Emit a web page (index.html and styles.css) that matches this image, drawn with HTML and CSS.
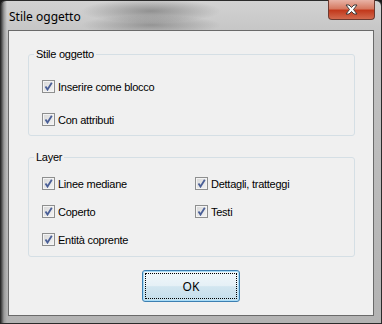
FILE: index.html
```html
<!DOCTYPE html>
<html lang="it">
 <head>
  <meta charset="utf-8">
  <title>Stile oggetto</title>
  <link rel="stylesheet" href="styles.css">
 </head>
 <body>
  <div class="window">
   <div class="titlebar">
    <span class="title">Stile oggetto</span>
    <span class="close">
     <svg width="15" height="11" viewBox="0 0 15 11">
      <path d="M2 1 L5 1 L7.5 3.5 L10 1 L13 1 L9.5 5.5 L13 10 L10 10 L7.5 7.5 L5 10 L2 10 L5.5 5.5 Z"
            fill="#fff" stroke="#3b3b3b" stroke-width="1" stroke-linejoin="round"/>
     </svg>
    </span>
   </div>

   <div class="client">
    <fieldset class="group first">
     <legend>Stile oggetto</legend>
     <div class="list">
      <label class="check"><span class="box"></span>Inserire come blocco</label>
      <label class="check"><span class="box"></span>Con attributi</label>
     </div>
    </fieldset>

    <fieldset class="group second">
     <legend>Layer</legend>
     <div class="grid">
      <label class="check"><span class="box"></span>Linee mediane</label>
      <label class="check"><span class="box"></span>Dettagli, tratteggi</label>
      <label class="check"><span class="box"></span>Coperto</label>
      <label class="check"><span class="box"></span>Testi</label>
      <label class="check"><span class="box"></span>Entità coprente</label>
     </div>
    </fieldset>

    <div class="buttons">
     <button class="btn">OK</button>
    </div>
   </div>
  </div>
 </body>
</html>
```

FILE: styles.css
```css
html, body { margin: 0; padding: 0; background: #1b1b1b; }

.window {
  box-sizing: border-box;
  width: 382px; height: 324px;
  padding: 0 7px 7px 7px;
  border-radius: 6px 6px 0 0;
  border: 1px solid #2b2b2b;
  display: flex; flex-direction: column;
  background:
    radial-gradient(ellipse 70px 12px at 150px 10px, rgba(70,70,70,.45), transparent),
    radial-gradient(ellipse 70px 10px at 150px 24px, rgba(70,70,70,.4), transparent),
    linear-gradient(to right, #3a3a3a 0, #9a9a9a 3px, transparent 6px),
    linear-gradient(to bottom, #d2d2d2 0, #c2c2c2 40px, #b3b3b3 100%);
}

.titlebar {
  height: 29px;
  display: flex; align-items: flex-start;
  font-family: "Noto Sans", sans-serif; font-size: 12px;
  color: #000;
}
.title { padding: 7px 0 0 1px; }
.close {
  margin-left: auto; margin-right: -1px; margin-top: -1px;
  width: 45px; height: 19px;
  border: 1px solid #6e3a30; border-top: none;
  border-radius: 0 0 4px 4px;
  background: linear-gradient(to bottom, #e8b3a6 0, #d67a62 45%, #c2391c 55%, #d26a4e 100%);
  display: flex; align-items: center; justify-content: center;
}

.client {
  flex: 1;
  background: #f0f0f0;
  border: 1px solid #6a6a6a;
  font-family: "Liberation Sans", Arial, sans-serif; font-size: 11px;
  letter-spacing: -0.25px;
  color: #000;
  display: flex; flex-direction: column;
}

.group {
  margin: 0 18px 0 19px;
  padding: 0;
  border: 1px solid #d5dfe5;
  border-radius: 3px;
}
.group legend { margin-left: 5px; padding: 0 2px; line-height: 13px; }
.first { margin-top: 17px; }
.second { margin-top: 15px; }

.list { display: flex; flex-direction: column; gap: 20px; padding: 19px 0 9px 13px; }
.grid {
  display: grid; grid-template-columns: 153px 1fr; row-gap: 15px;
  padding: 13px 0 10px 13px;
}

.check { display: flex; align-items: center; gap: 3px; height: 13px; white-space: nowrap; }
.box {
  box-sizing: border-box;
  width: 13px; height: 13px;
  border: 1px solid #8e8f8f;
  background:
    url("data:image/svg+xml,%3Csvg xmlns='http://www.w3.org/2000/svg' width='11' height='11'%3E%3Cpath d='M2.5 5.5 L4.5 8.5 L8.8 1.8' fill='none' stroke='%234a5f97' stroke-width='1.8'/%3E%3C/svg%3E") no-repeat center,
    linear-gradient(135deg, #d8d8d8, #f4f4f4);
  box-shadow: inset 0 0 0 1px #f4f4f4;
}

.buttons { display: flex; justify-content: center; margin-top: 13px; }
.btn {
  width: 98px; height: 32px;
  font-family: "Noto Sans", sans-serif; font-size: 12px; color: #000;
  letter-spacing: 0;
  border: 1px solid #3c7fb1;
  border-radius: 3px;
  box-shadow: 0 0 0 1px #a9dcf7 inset;
  background: linear-gradient(to bottom, #f2f8fb 0, #e5f0f6 50%, #d2e6f0 52%, #c4deeb 100%);
  outline: 1px dotted #000; outline-offset: -4px;
  padding: 0;
}
```
